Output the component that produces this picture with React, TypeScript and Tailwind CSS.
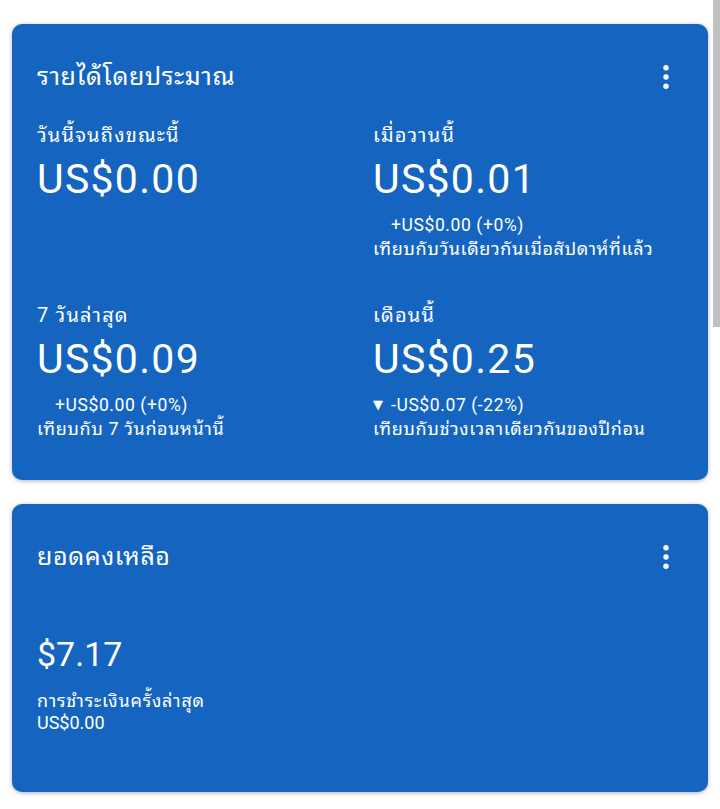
import React from 'react';

const font = "font-['Roboto','Noto_Sans_Thai_Looped','Noto_Sans','Noto_Sans_Thai','DejaVu_Sans',sans-serif]";

const MoreDots: React.FC = () => (
  <svg width="8" height="26" viewBox="0 0 8 26" className="shrink-0">
    <circle cx="4" cy="3.7" r="2.7" fill="#ffffff" />
    <circle cx="4" cy="13" r="2.7" fill="#ffffff" />
    <circle cx="4" cy="22.3" r="2.7" fill="#ffffff" />
  </svg>
);

type Stat = {
  label: string;
  amount: string;
  change?: string;
  down?: boolean;
  compare?: string;
};

const stats: Stat[] = [
  { label: 'วันนี้จนถึงขณะนี้', amount: 'US$0.00' },
  {
    label: 'เมื่อวานนี้',
    amount: 'US$0.01',
    change: '+US$0.00 (+0%)',
    compare: 'เทียบกับวันเดียวกันเมื่อสัปดาห์ที่แล้ว',
  },
  {
    label: '7 วันล่าสุด',
    amount: 'US$0.09',
    change: '+US$0.00 (+0%)',
    compare: 'เทียบกับ 7 วันก่อนหน้านี้',
  },
  {
    label: 'เดือนนี้',
    amount: 'US$0.25',
    change: '-US$0.07 (-22%)',
    down: true,
    compare: 'เทียบกับช่วงเวลาเดียวกันของปีก่อน',
  },
];

const StatBlock: React.FC<{ stat: Stat }> = ({ stat }) => (
  <div className="flex flex-col">
    <p className="text-[20px] leading-[26px] tracking-[1.2px]">{stat.label}</p>
    <p className="mt-[7px] text-[41px] leading-[48px] tracking-[1.3px]">{stat.amount}</p>
    {stat.change && (
      <>
        <div className="mt-[10px] flex items-center text-[17.5px] leading-[24px]">
          <span className="w-[18px] shrink-0 text-[13px]">{stat.down ? '▼' : ''}</span>
          <span className="tracking-[0.6px]">{stat.change}</span>
        </div>
        <p className="text-[18px] leading-[24px] tracking-[0.6px] whitespace-nowrap">{stat.compare}</p>
      </>
    )}
  </div>
);

const CardHeader: React.FC<{ title: string }> = ({ title }) => (
  <div className="flex items-center justify-between pr-[38px]">
    <h2 className="text-[25px] leading-[32px] tracking-[0.6px]">{title}</h2>
    <MoreDots />
  </div>
);

export default function App() {
  return (
    <div className={`relative min-h-[809px] bg-white ${font}`}>
      <div className="flex flex-col gap-6 px-3 pt-6 pb-4">
        {/* Estimated earnings */}
        <div className="rounded-[10px] bg-[#1565c0] pl-[25px] pt-[37px] pb-[39px] text-white shadow-[0_1px_4px_rgba(0,0,0,0.3)]">
          <CardHeader title="รายได้โดยประมาณ" />
          <div className="mt-[29px] grid grid-cols-[336px_1fr] gap-y-[41px]">
            {stats.map((s) => (
              <StatBlock key={s.label} stat={s} />
            ))}
          </div>
        </div>

        {/* Balance */}
        <div className="rounded-[10px] bg-[#1565c0] pl-[25px] pt-[37px] pb-[58px] text-white shadow-[0_1px_4px_rgba(0,0,0,0.3)]">
          <CardHeader title="ยอดคงเหลือ" />
          <p className="mt-[59px] text-[34px] leading-[44px]">$7.17</p>
          <p className="mt-[14px] text-[18px] leading-[22px] tracking-[0.8px]">การชำระเงินครั้งล่าสุด</p>
          <p className="text-[18px] leading-[22px]">US$0.00</p>
        </div>
      </div>

      {/* scrollbar */}
      <div className="absolute right-0 top-0 h-[327px] w-[7px] bg-[#c1c1c1]" />
    </div>
  );
}
